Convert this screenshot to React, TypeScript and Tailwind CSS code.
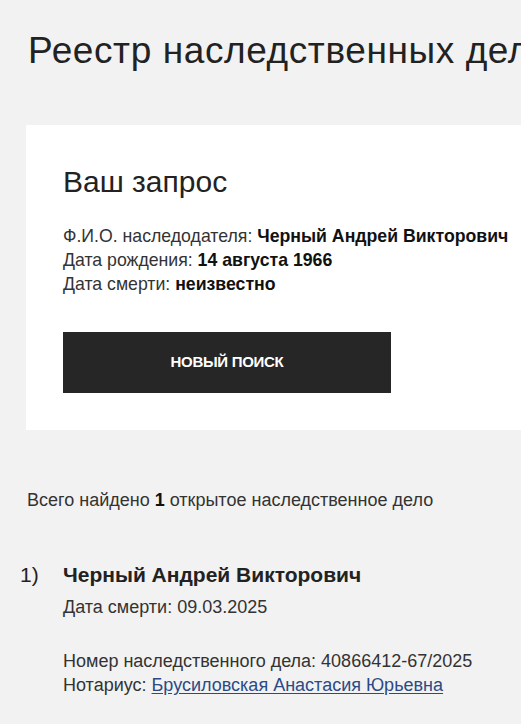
import React from "react";

const font = { fontFamily: '"Liberation Sans", Arial, sans-serif' };

export default function App() {
  return (
    <div className="min-h-[724px] w-full overflow-hidden bg-[#f2f2f2] text-[#222]" style={font}>
      <div className="w-[640px] pl-[26px]">
        <h1 className="pt-[31px] pl-[2px] text-[37px] leading-[40px] tracking-[0.6px] whitespace-nowrap">
          Реестр наследственных дел
        </h1>

        <section className="mt-[54px] bg-white pl-[37px] pt-[40px] pb-[37px]">
          <h2 className="text-[30px] leading-[34px]">Ваш запрос</h2>
          <div className="mt-[25px] text-[17.7px] leading-[24px] text-[#333]">
            <p>
              Ф.И.О. наследодателя: <b className="text-[#111]">Черный Андрей Викторович</b>
            </p>
            <p>
              Дата рождения: <b className="text-[#111]">14 августа 1966</b>
            </p>
            <p>
              Дата смерти: <b className="text-[#111]">неизвестно</b>
            </p>
          </div>
          <button className="mt-[36px] flex h-[61px] w-[328px] items-center justify-center bg-[#262626] text-[15px] font-bold uppercase tracking-[-0.3px] text-white">
            Новый поиск
          </button>
        </section>

        <p className="mt-[59px] pl-[1px] text-[18px] leading-[22px] text-[#333]">
          Всего найдено <b className="text-[#111]">1</b> открытое наследственное дело
        </p>

        <div className="mt-[51px] flex -ml-[6px]">
          <span className="w-[43px] text-[21px] leading-[26px]">1)</span>
          <div>
            <h3 className="text-[21px] font-bold leading-[26px]">Черный Андрей Викторович</h3>
            <p className="mt-[8px] text-[18px] leading-[22px] text-[#333]">Дата смерти: 09.03.2025</p>
            <div className="mt-[31px] text-[18px] leading-[24px] text-[#333]">
              <p>Номер наследственного дела: 40866412-67/2025</p>
              <p>
                Нотариус:{" "}
                <a href="#" className="text-[#2b4a86] underline underline-offset-2">
                  Брусиловская Анастасия Юрьевна
                </a>
              </p>
            </div>
          </div>
        </div>
      </div>
    </div>
  );
}
